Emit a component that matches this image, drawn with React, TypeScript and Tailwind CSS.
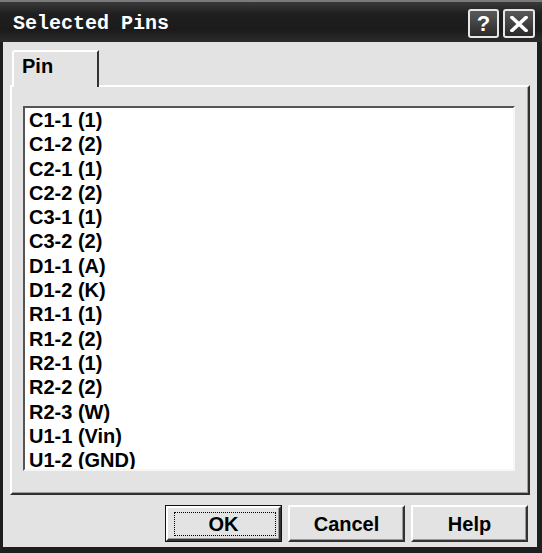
import React from "react";

const items = [
  "C1-1 (1)",
  "C1-2 (2)",
  "C2-1 (1)",
  "C2-2 (2)",
  "C3-1 (1)",
  "C3-2 (2)",
  "D1-1 (A)",
  "D1-2 (K)",
  "R1-1 (1)",
  "R1-2 (2)",
  "R2-1 (1)",
  "R2-2 (2)",
  "R2-3 (W)",
  "U1-1 (Vin)",
  "U1-2 (GND)",
];

function Btn({ label, def }: { label: string; def?: boolean }) {
  return (
    <div
      className={
        def
          ? "w-[117px] h-[37px] border border-[#141414]"
          : "w-[117px] h-[37px]"
      }
    >
      <div className="relative w-full h-full bg-[#e3e3e3] border-t-2 border-l-2 border-r-2 border-b-2 border-t-white border-l-white border-r-[#333333] border-b-[#333333] shadow-[inset_-1px_-1px_0_#9a9a9a] flex items-center justify-center">
        {def && (
          <div className="absolute left-[6px] top-[4px] right-[3px] bottom-[3px] border border-dotted border-black" />
        )}
        <span className="font-['Liberation_Sans'] font-bold text-[20px] leading-[20px] text-black">
          {label}
        </span>
      </div>
    </div>
  );
}

export default function App() {
  return (
    <div className="w-[542px] h-[553px] flex flex-col bg-[#1e1e1e] overflow-hidden font-['Liberation_Sans',sans-serif]">
      {/* Title bar */}
      <div className="h-[42px] flex items-start border-t-2 border-[#7a7a7a] bg-[linear-gradient(to_bottom,#3a3a3a_0%,#1f1f1f_30%,#1b1b1b_70%,#2c2c2c_100%)]">
        <div className="pl-[13px] pt-[12px] font-['Liberation_Mono',monospace] font-bold text-[20px] leading-[20px] text-white">
          Selected Pins
        </div>
        <div className="ml-auto flex gap-[4px] pr-[7px] pt-[7px]">
          <div className="w-[31px] h-[29px] rounded-[3px] border-2 border-[#e6e6e6] bg-[linear-gradient(to_bottom,#5a5a5a,#2a2a2a)] flex items-center justify-center">
            <span className="font-['Liberation_Sans'] font-bold text-[22px] leading-[22px] text-white">
              ?
            </span>
          </div>
          <div className="w-[32px] h-[29px] rounded-[3px] border-2 border-[#e6e6e6] bg-[linear-gradient(to_bottom,#5a5a5a,#2a2a2a)] flex items-center justify-center">
            <svg width="18" height="16" viewBox="0 0 18 16">
              <path
                d="M2 1.5 L16 14.5 M16 1.5 L2 14.5"
                stroke="white"
                strokeWidth="3.6"
                strokeLinecap="square"
                fill="none"
              />
            </svg>
          </div>
        </div>
      </div>

      {/* Body */}
      <div className="flex-1 ml-[3px] mr-[5px] mb-[6px] bg-[#e3e3e3] flex flex-col pt-[8px]">
        {/* Tab */}
        <div className="relative z-10 ml-[9px] w-[87px] h-[37px] -mb-[2px] bg-[#e3e3e3] border-t-2 border-l-2 border-r-2 border-t-white border-l-white border-r-[#333333] rounded-tl-[3px] pl-[8px] pt-[4px]">
          <span className="font-['Liberation_Sans'] font-bold text-[20px] leading-[20px] text-black">
            Pin
          </span>
        </div>

        {/* Panel */}
        <div className="mx-[7px] h-[410px] border-2 border-t-white border-l-white border-r-[#303030] border-b-[#303030] shadow-[inset_-1px_-1px_0_#a0a0a0] pt-[19px] pl-[11px]">
          <div className="w-[492px] h-[365px] bg-white border-2 border-t-[#555555] border-l-[#555555] border-r-[#f6f6f6] border-b-[#f6f6f6] overflow-hidden pl-[4px]">
            {items.map((it) => (
              <div
                key={it}
                className="font-['Liberation_Sans'] font-bold text-[20px] leading-[24.3px] text-black whitespace-pre"
              >
                {it}
              </div>
            ))}
          </div>
        </div>

        {/* Buttons */}
        <div className="mt-[10px] flex justify-end gap-[6px] pr-[9px]">
          <Btn label="OK" def />
          <Btn label="Cancel" />
          <Btn label="Help" />
        </div>
      </div>
    </div>
  );
}
